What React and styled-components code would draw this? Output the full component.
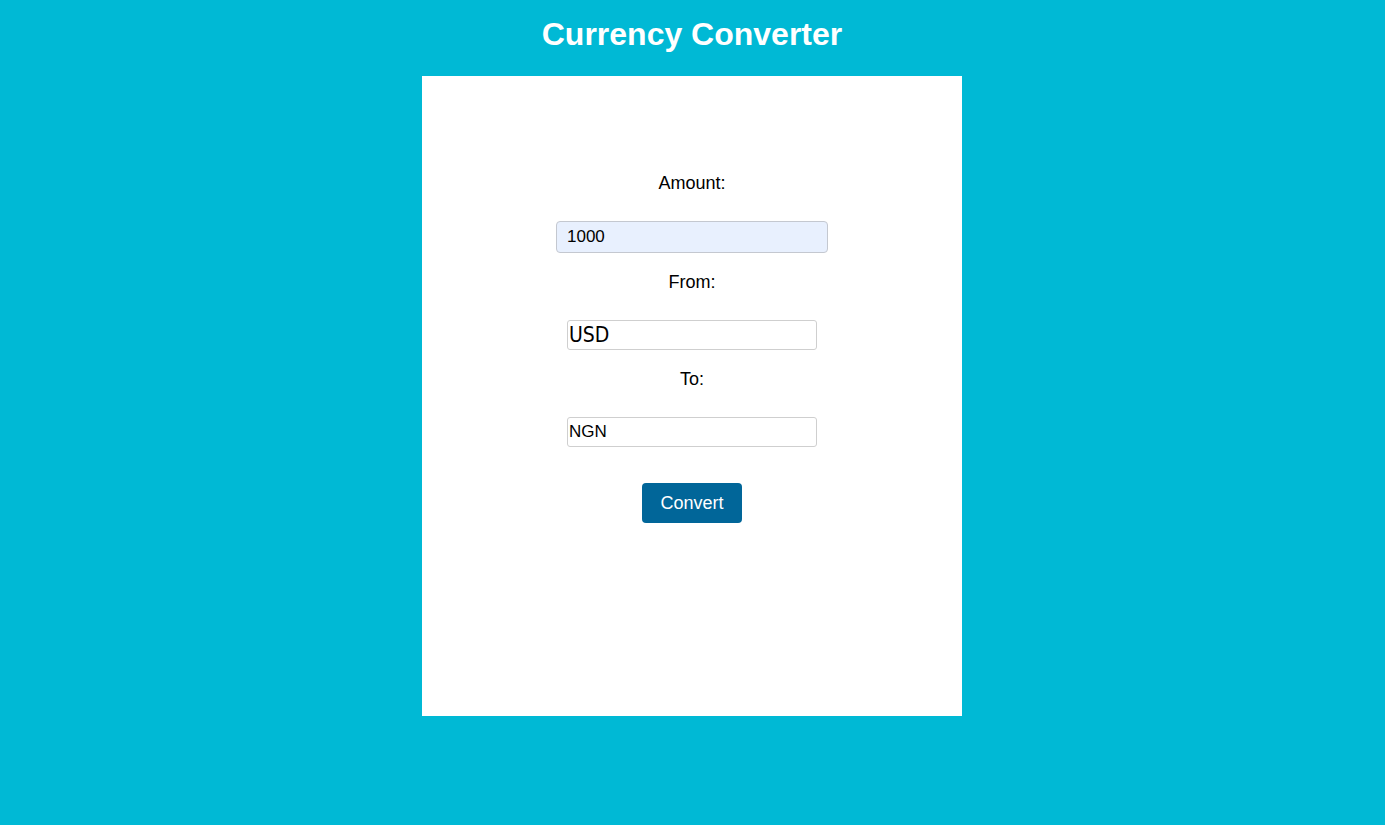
import styled, { createGlobalStyle } from "styled-components";

const GlobalStyle = createGlobalStyle`
  html, body {
    margin: 0;
    padding: 0;
    background-color: #00b9d5;
    font-family: "Liberation Sans", Arial, sans-serif;
  }
`;

const Page = styled.main`
  min-height: 825px;
  display: flex;
  flex-direction: column;
  align-items: center;
  padding: 16px 1px 0 0;
  box-sizing: border-box;
`;

const Title = styled.h1`
  margin: 0 0 23px;
  color: #ffffff;
  font-size: 32px;
  line-height: 37px;
  font-weight: 700;
`;

const Card = styled.section`
  width: 540px;
  height: 640px;
  background-color: #ffffff;
  box-sizing: border-box;
  padding-top: 78px;
  display: flex;
  flex-direction: column;
  align-items: center;
`;

const Field = styled.div`
  display: flex;
  flex-direction: column;
  align-items: center;
  margin-top: 19px;
`;

const Label = styled.label`
  display: block;
  font-size: 18px;
  line-height: 21px;
  color: #000;
  margin-bottom: 27px;
`;

const AmountInput = styled.input`
  width: 272px;
  height: 32px;
  box-sizing: border-box;
  padding: 0 10px;
  border: 1px solid #c4c8d0;
  border-radius: 4px;
  background-color: #e8f0fe;
  font-family: "Liberation Sans", Arial, sans-serif;
  font-size: 17px;
  color: #000;
  outline: none;
`;

const CurrencyInput = styled.input`
  width: 250px;
  height: 30px;
  box-sizing: border-box;
  padding: 0 1px;
  border: 1px solid #cfcfcf;
  border-radius: 3px;
  background-color: #fff;
  color: #000;
  outline: none;
  font-family: ${(p) =>
    p.$narrow
      ? `"Liberation Sans Narrow", "DejaVu Sans Condensed", sans-serif`
      : `"Liberation Sans", Arial, sans-serif`};
  font-size: ${(p) => (p.$narrow ? "21px" : "17px")};
`;

const Button = styled.button`
  margin-top: 36px;
  width: 100px;
  height: 40px;
  border: none;
  border-radius: 4px;
  background-color: #016699;
  color: #fff;
  font-family: "Liberation Sans", Arial, sans-serif;
  font-size: 18px;
  cursor: pointer;
`;

export default function App() {
  return (
    <>
      <GlobalStyle />
      <Page>
        <Title>Currency Converter</Title>
        <Card>
          <Field>
            <Label htmlFor="amount">Amount:</Label>
            <AmountInput id="amount" defaultValue="1000" />
          </Field>
          <Field>
            <Label htmlFor="from">From:</Label>
            <CurrencyInput id="from" $narrow defaultValue="USD" />
          </Field>
          <Field>
            <Label htmlFor="to">To:</Label>
            <CurrencyInput id="to" defaultValue="NGN" />
          </Field>
          <Button type="button">Convert</Button>
        </Card>
      </Page>
    </>
  );
}
